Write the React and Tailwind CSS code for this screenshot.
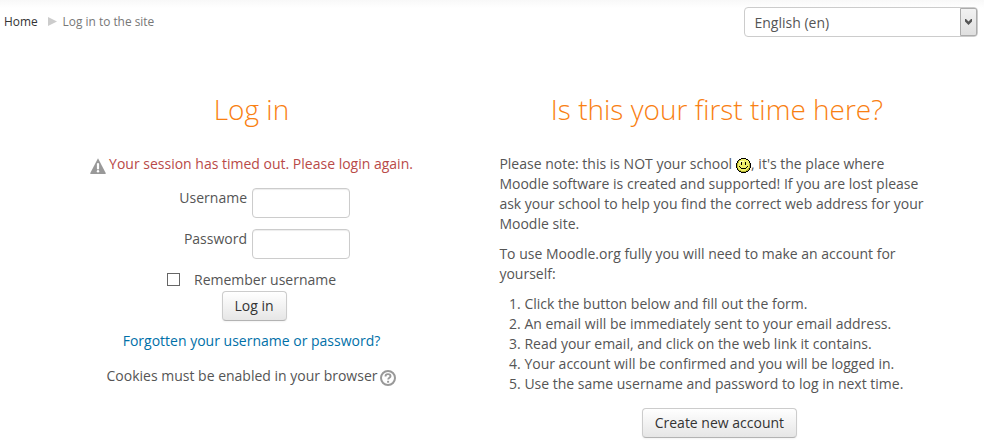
const buttonClass =
  "h-[30px] rounded-[4px] border border-[#ccc] border-b-[#b3b3b3] bg-linear-to-b from-white to-[#e6e6e6] text-[#333] leading-5 whitespace-nowrap shadow-[0_1px_2px_rgba(0,0,0,0.05)]";
const inputClass =
  "block h-[30px] w-[98px] rounded-[4px] border border-[#ccc] bg-white px-1.5 shadow-[inset_0_1px_1px_rgba(0,0,0,0.075)] outline-none";

function WarningIcon() {
  return (
    <svg className="mt-1 h-4 w-4 shrink-0" viewBox="0 0 16 16">
      <path d="M8 .2 15.7 15a.7.7 0 0 1-.6 1H.9a.7.7 0 0 1-.6-1Z" fill="#999" />
      <path d="M8 6v4.5" stroke="#fff" strokeWidth="2.2" strokeLinecap="round" />
      <circle cx="8" cy="13.3" r="1.2" fill="#fff" />
    </svg>
  );
}

function HelpIcon() {
  return (
    <svg className="mt-1 h-4 w-4 shrink-0" viewBox="0 0 16 16" fill="none">
      <circle cx="8" cy="8" r="7" stroke="#999" strokeWidth="2" />
      <path d="M5.5 6.4C5.5 4.9 6.6 4.1 8 4.1s2.5.8 2.5 2.1c0 1.6-2.3 1.6-2.3 3.3" stroke="#999" strokeWidth="1.9" />
      <rect x="7.1" y="10.8" width="2" height="1.9" fill="#999" />
    </svg>
  );
}

function Smiley() {
  return (
    <svg className="mt-1 h-[15px] w-[15px] shrink-0" viewBox="0 0 15 15" shapeRendering="crispEdges">
      <path d="M5 0h5v1h2v1h1v1h1v2h1v5h-1v2h-1v1h-1v1h-2v1H5v-1H3v-1H2v-1H1v-2H0V5h1V3h1V2h1V1h2Z" fill="#000" />
      <path d="M5 1h5v1h2v1h1v2h1v5h-1v2h-1v1h-2v1H5v-1H3v-1H2v-2H1V5h1V3h1V2h2Z" fill="#b5b52e" />
      <path d="M5 1h5v1h2v1h1v2h0v5h-1v1h-1v1h-1v1H5v-1H3v-1H2V5h1V3h1V2h1Z" fill="#eeee6a" />
      <path d="M4 3h4v1H5v1H3V4h1Z" fill="#ffffb5" />
      <path d="M5 4h1v3H5ZM9 4h1v3H9ZM3 8h1v1h1v1H4V9H3ZM11 8h1v1h-1v1h-1V9h1ZM5 10h5v1H5Z" fill="#000" />
    </svg>
  );
}

const steps = [
  "Click the button below and fill out the form.",
  "An email will be immediately sent to your email address.",
  "Read your email, and click on the web link it contains.",
  "Your account will be confirmed and you will be logged in.",
  "Use the same username and password to log in next time.",
];

function Heading({ children }) {
  return (
    <h2 className="h-10 text-center text-[28px] leading-10 font-light whitespace-nowrap text-[#f98012]">
      {children}
    </h2>
  );
}

export default function App() {
  return (
    <div className="h-[447px] w-[984px] overflow-hidden bg-white font-['Open_Sans','Noto_Sans',sans-serif] text-[14px] leading-5 text-[#555]">
      <header className="flex h-[89px] items-start justify-between bg-[linear-gradient(#f8f8f8,#fff_8px)] pr-[6px] pl-1">
        <nav className="flex pt-[11px] text-[11.9px] leading-5">
          <a className="text-[#333]">Home</a>
          <svg className="mt-[6px] mr-[6px] ml-[10px] h-[9px] w-[9px]" viewBox="0 0 9 9">
            <path d="M0 0 9 4.5 0 9Z" fill="#ccc" />
          </svg>
          <span className="text-[#777]">Log in to the site</span>
        </nav>
        <div className="mt-[7px] flex h-[30px] w-[234px] justify-between rounded-[4px] border border-[#ccc] bg-white">
          <span className="pt-[5px] pl-[9.5px]">English (en)</span>
          <span className="flex w-[17px] items-center justify-center rounded-r-[2px] border border-[#acacac] bg-linear-to-b from-[#f2f2f2] to-[#dfdfdf]">
            <svg className="h-[6px] w-[7px]" viewBox="0 0 7 6">
              <path d="M0 0h1l2.5 2.5L6 0h1v2.5L3.5 6 0 2.5Z" fill="#555" />
            </svg>
          </span>
        </div>
      </header>
      <main className="flex gap-[30px] pl-[33px]">
        <section className="flex w-[437px] flex-col items-center">
          <Heading>Log in</Heading>
          <div className="mt-[25px] flex gap-[3px] text-[#b94a48]">
            <WarningIcon />
            <span className="whitespace-nowrap">Your session has timed out. Please login again.</span>
          </div>
          <form className="mt-[14px] flex w-full flex-col">
            <div className="grid grid-cols-[214px_98px] gap-x-[5px] gap-y-[11px]">
              <label className="text-right" htmlFor="username">Username</label>
              <input id="username" className={inputClass} />
              <label className="text-right" htmlFor="password">Password</label>
              <input id="password" type="password" className={inputClass} />
            </div>
            <label className="mt-[11px] ml-[134px] flex h-[21px]">
              <input type="checkbox" className="mt-[3px] h-[13px] w-[13px] appearance-none border border-[#666] bg-white" />
              <span className="ml-[14px]">Remember username</span>
            </label>
            <button type="button" className={`${buttonClass} ml-[189px] w-[65px] pr-px`}>Log in</button>
          </form>
          <a className="mt-[10px] whitespace-nowrap text-[#0070a8]">Forgotten your username or password?</a>
          <div className="mt-[15px] flex gap-[3px] whitespace-nowrap">
            <span>Cookies must be enabled in your browser</span>
            <HelpIcon />
          </div>
        </section>
        <section className="-ml-[0.6px] w-[436px]">
          <div className="-ml-px">
            <Heading>Is this your first time here?</Heading>
          </div>
          <p className="mt-[25px]">
            <span className="flex whitespace-nowrap">
              <span className="mr-1">Please note: this is NOT your school</span>
              <Smiley />
              <span>, it's the place where</span>
            </span>
            <span className="block">
              Moodle software is created and supported! If you are lost please ask your school to
              help you find the correct web address for your Moodle site.
            </span>
          </p>
          <p className="mt-[10px]">To use Moodle.org fully you will need to make an account for yourself:</p>
          <ol className="mt-[10px] list-decimal pl-[25px]">
            {steps.map((step) => (
              <li key={step}>{step}</li>
            ))}
          </ol>
          <button type="button" className={`${buttonClass} mt-[14px] ml-[143px] block w-[155px] pr-px`}>
            Create new account
          </button>
        </section>
      </main>
    </div>
  );
}
